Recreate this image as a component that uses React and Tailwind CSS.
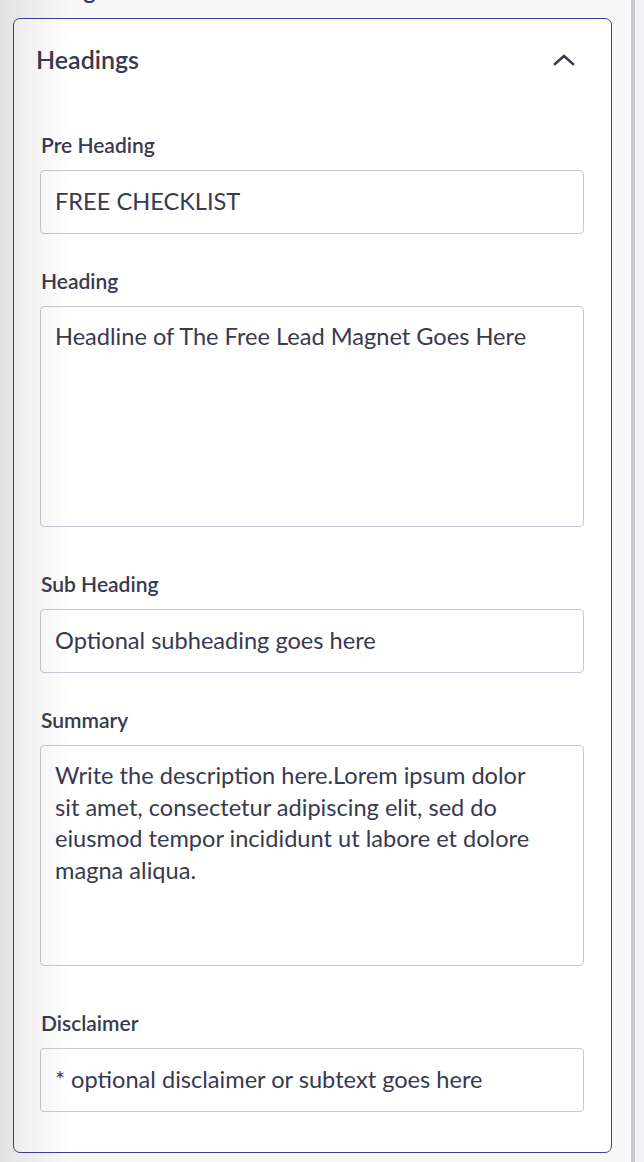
import React from 'react';

const font = { fontFamily: 'Lato, "Noto Sans", sans-serif' };

function Field({ label, value, rows }) {
  return (
    <div className="flex flex-col">
      <label className="text-[21px] font-semibold text-[#383a4f] leading-[20px] mb-[15px] pl-[1px]">{label}</label>
      {rows ? (
        <div className="h-[221px] border border-[#c9c9d6] rounded-[4px] px-[14px] pt-[14px] text-[23.6px] leading-[31.6px] text-[#383a4f] mb-[10px]">
          {value}
        </div>
      ) : (
        <div className="h-[64px] border border-[#c9c9d6] rounded-[4px] px-[14px] flex items-center text-[23.6px] text-[#383a4f]">
          {value}
        </div>
      )}
    </div>
  );
}

export default function App() {
  return (
    <div className="relative flex w-[644px] h-[1162px] overflow-hidden bg-[#f8f8f9]" style={font}>
      <div className="flex-1 flex flex-col pl-[13px] pr-[19px]">
        <div className="h-[18px] overflow-hidden pl-[23px]">
          <div className="text-[24px] font-semibold text-[#383a4f] leading-none -mt-[22px]">Design</div>
        </div>
        <div className="h-[1135px] bg-white border border-[#3c3f98] rounded-[7px] pl-[26px] pr-[27px]">
          <div className="flex items-center justify-between h-[82px] pr-[9px] -ml-[4px]">
            <h2 className="text-[25px] font-semibold text-[#383a4f]">Headings</h2>
            <svg width="22" height="14" viewBox="0 0 22 14" fill="none" stroke="#383a4f" strokeWidth="2.6" strokeLinecap="square">
              <path d="M2 11 L11 3 L20 11" />
            </svg>
          </div>
          <div className="flex flex-col gap-[37px] pt-[34px]">
            <Field label="Pre Heading" value="FREE CHECKLIST" />
            <Field label="Heading" value="Headline of The Free Lead Magnet Goes Here" rows />
            <Field label="Sub Heading" value="Optional subheading goes here" />
            <Field
              label="Summary"
              value={
                <>
                  Write the description here.Lorem ipsum dolor
                  <br />
                  sit amet, consectetur adipiscing elit, sed do
                  <br />
                  eiusmod tempor incididunt ut labore et dolore
                  <br />
                  magna aliqua.
                </>
              }
              rows
            />
            <Field label="Disclaimer" value="* optional disclaimer or subtext goes here" />
          </div>
        </div>
      </div>
      <div className="w-[13px] flex">
        <div className="w-[4px] bg-[#c9c9d1]" />
        <div className="flex-1 bg-[#f3f3f5]" />
      </div>
      <div className="pointer-events-none absolute inset-y-0 left-0 w-[70px] bg-[linear-gradient(to_right,rgba(0,0,0,0.09),rgba(0,0,0,0))]" />
    </div>
  );
}
